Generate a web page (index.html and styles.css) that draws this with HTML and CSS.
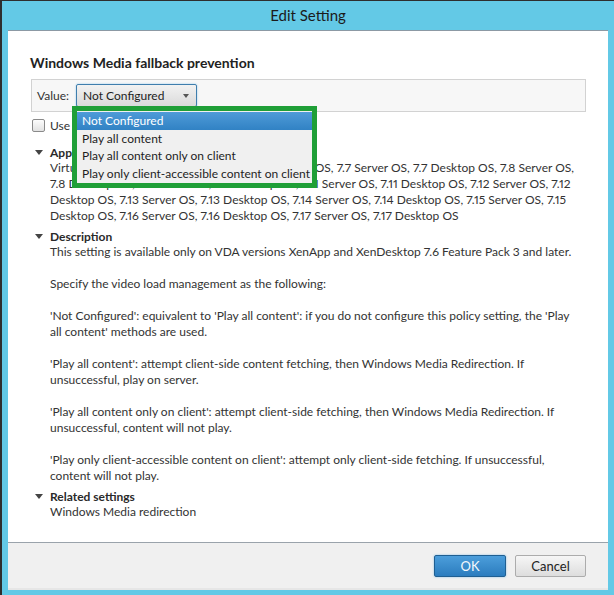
FILE: index.html
```html
<!DOCTYPE html>
<html lang="en">
<head>
    <meta charset="UTF-8">
    <title>Edit Setting</title>
    <link rel="stylesheet" href="styles.css">
</head>
<body>
    <div class="window">
        <div class="titlebar">Edit Setting</div>

        <div class="client">
            <div class="content">
                <h1 class="setting-name">Windows Media fallback prevention</h1>

                <!-- Value picker, opened -->
                <div class="value-box">
                    <span class="value-label">Value:</span>
                    <div class="combo">
                        <span class="combo-text">Not Configured</span>
                        <span class="combo-arrow"></span>

                        <ul class="dropdown">
                            <li class="selected">Not Configured</li>
                            <li>Play all content</li>
                            <li>Play all content only on client</li>
                            <li>Play only client-accessible content on client</li>
                        </ul>
                    </div>
                </div>

                <label class="use-default">
                    <span class="checkbox"></span>
                    Use default value: Not Configured
                </label>

                <div class="section">
                    <div class="section-head"><span class="caret"></span>Applies to</div>
                    <div class="section-body">
                        <p class="versions">Virtual Delivery Agent: 7.6 Server OS, 7.6 Desktop OS, 7.7 Server OS, 7.7 Desktop OS, 7.8 Server OS,<br>
                        7.8 Desktop OS, 7.9 Server OS, 7.9 Desktop OS, 7.11 Server OS, 7.11 Desktop OS, 7.12 Server OS, 7.12<br>
                        Desktop OS, 7.13 Server OS, 7.13 Desktop OS, 7.14 Server OS, 7.14 Desktop OS, 7.15 Server OS, 7.15<br>
                        Desktop OS, 7.16 Server OS, 7.16 Desktop OS, 7.17 Server OS, 7.17 Desktop OS</p>
                    </div>
                </div>

                <div class="section">
                    <div class="section-head"><span class="caret"></span>Description</div>
                    <div class="section-body">
                        <p>This setting is available only on VDA versions XenApp and XenDesktop 7.6 Feature Pack 3 and later.</p>
                        <p>Specify the video load management as the following:</p>
                        <p>'Not Configured': equivalent to 'Play all content': if you do not configure this policy setting, the 'Play all content' methods are used.</p>
                        <p>'Play all content': attempt client-side content fetching, then Windows Media Redirection. If unsuccessful, play on server.</p>
                        <p>'Play all content only on client': attempt client-side fetching, then Windows Media Redirection. If unsuccessful, content will not play.</p>
                        <p>'Play only client-accessible content on client': attempt only client-side fetching. If unsuccessful, content will not play.</p>
                    </div>
                </div>

                <div class="section">
                    <div class="section-head"><span class="caret"></span>Related settings</div>
                    <div class="section-body">
                        <p>Windows Media redirection</p>
                    </div>
                </div>
            </div>

            <div class="footer">
                <button class="btn btn-ok">OK</button>
                <button class="btn">Cancel</button>
            </div>
        </div>
    </div>
</body>
</html>
```

FILE: styles.css
```css
* {
    margin: 0;
    padding: 0;
    box-sizing: border-box;
}

body {
    font-family: Lato, "Open Sans", sans-serif;
    font-size: 12px;
    font-variant-numeric: proportional-nums;
    color: #2b2b2b;
    background-color: #63c9e6;
}

.window {
    width: 614px;
    height: 595px;
    display: flex;
    flex-direction: column;
    background-color: #63c9e6;
    border-top: 1px solid #2e2e2e;
    border-left: 2px solid #2e2e2e;
    padding: 0 6px 5px 6px;
}

.titlebar {
    height: 29px;
    display: flex;
    align-items: center;
    justify-content: center;
    font-size: 15px;
    color: #1b1b1b;
    padding-bottom: 2px;
}

.client {
    flex: 1;
    display: flex;
    flex-direction: column;
    background: white;
    border-top: 1px solid #8c99a4;
}

.content {
    flex: 1;
    padding: 24px 22px 0 22px;
}

.setting-name {
    font-size: 14px;
    font-weight: bold;
    line-height: 16px;
    color: #222;
    margin-bottom: 8px;
}

.value-box {
    display: flex;
    align-items: center;
    height: 33px;
    width: 555px;
    margin-left: 1px;
    padding: 0 0 0 5px;
    background-color: #f7f7f7;
    border: 1px solid #d2d2d2;
}

.value-label {
    color: #333;
    margin-right: 7px;
}

.combo {
    position: relative;
    display: flex;
    align-items: center;
    width: 121px;
    height: 23px;
    padding: 0 0 0 6px;
    border: 1px solid #3f7ead;
    border-radius: 2px;
    background: linear-gradient(#f2f2f2, #dadada);
    box-shadow: 0 0 2px #8cc4ea;
    color: #1e1e1e;
}

.combo-text {
    flex: 1;
}

.combo-arrow {
    width: 0;
    height: 0;
    margin-right: 7px;
    border-left: 3.5px solid transparent;
    border-right: 3.5px solid transparent;
    border-top: 4px solid #555;
}

.dropdown {
    position: absolute;
    left: -5px;
    top: 21px;
    width: 245px;
    list-style: none;
    border: 5px solid #1f9f37;
    background-color: #f0f0f0;
    padding: 1px 0;
    z-index: 10;
}

.dropdown li {
    height: 17.5px;
    line-height: 17.5px;
    padding-left: 5px;
    color: #1e1e1e;
    white-space: nowrap;
}

.dropdown li.selected {
    background: linear-gradient(#4f9bd8, #3182c4);
    color: white;
}

.use-default {
    display: flex;
    align-items: center;
    height: 14px;
    margin-top: 6px;
    color: #333;
}

.checkbox {
    width: 13px;
    height: 13px;
    margin: 0 5px 0 2px;
    border: 1px solid #8a8a8a;
    border-radius: 2px;
    background: linear-gradient(#fdfdfd, #e2e2e2);
}

.section {
    margin-top: 4px;
}

.use-default + .section {
    margin-top: 12px;
}

.section-head {
    display: flex;
    align-items: center;
    height: 16px;
    font-weight: bold;
    color: #2a2a2a;
}

.caret {
    width: 0;
    height: 0;
    margin: 0 7px 0 5px;
    border-left: 4px solid transparent;
    border-right: 4px solid transparent;
    border-top: 5px solid #444;
}

.section-body {
    padding-left: 20px;
    width: 551px;
    line-height: 16px;
    color: #333;
}

.section-body p + p {
    margin-top: 16px;
}

.section-body .versions {
    white-space: nowrap;
}

.footer {
    display: flex;
    justify-content: flex-end;
    gap: 9px;
    height: 48px;
    padding: 12px 22px 0 0;
    background-color: #f0f0f0;
    border-top: 1px solid #9aa3ab;
    border-bottom: 2px solid #e6e6e6;
}

.btn {
    width: 71px;
    height: 22px;
    font-family: Lato, "Open Sans", sans-serif;
    font-size: 13px;
    color: #222;
    border: 1px solid #acacac;
    border-radius: 2px;
    background: linear-gradient(#f6f6f6, #dddddd);
}

.btn-ok {
    width: 72px;
    color: #f4f8fc;
    border-color: #1f5f92;
    background: linear-gradient(#4c9edb, #2b7cbe);
    box-shadow: 0 0 2px #79b8e4;
}
```
